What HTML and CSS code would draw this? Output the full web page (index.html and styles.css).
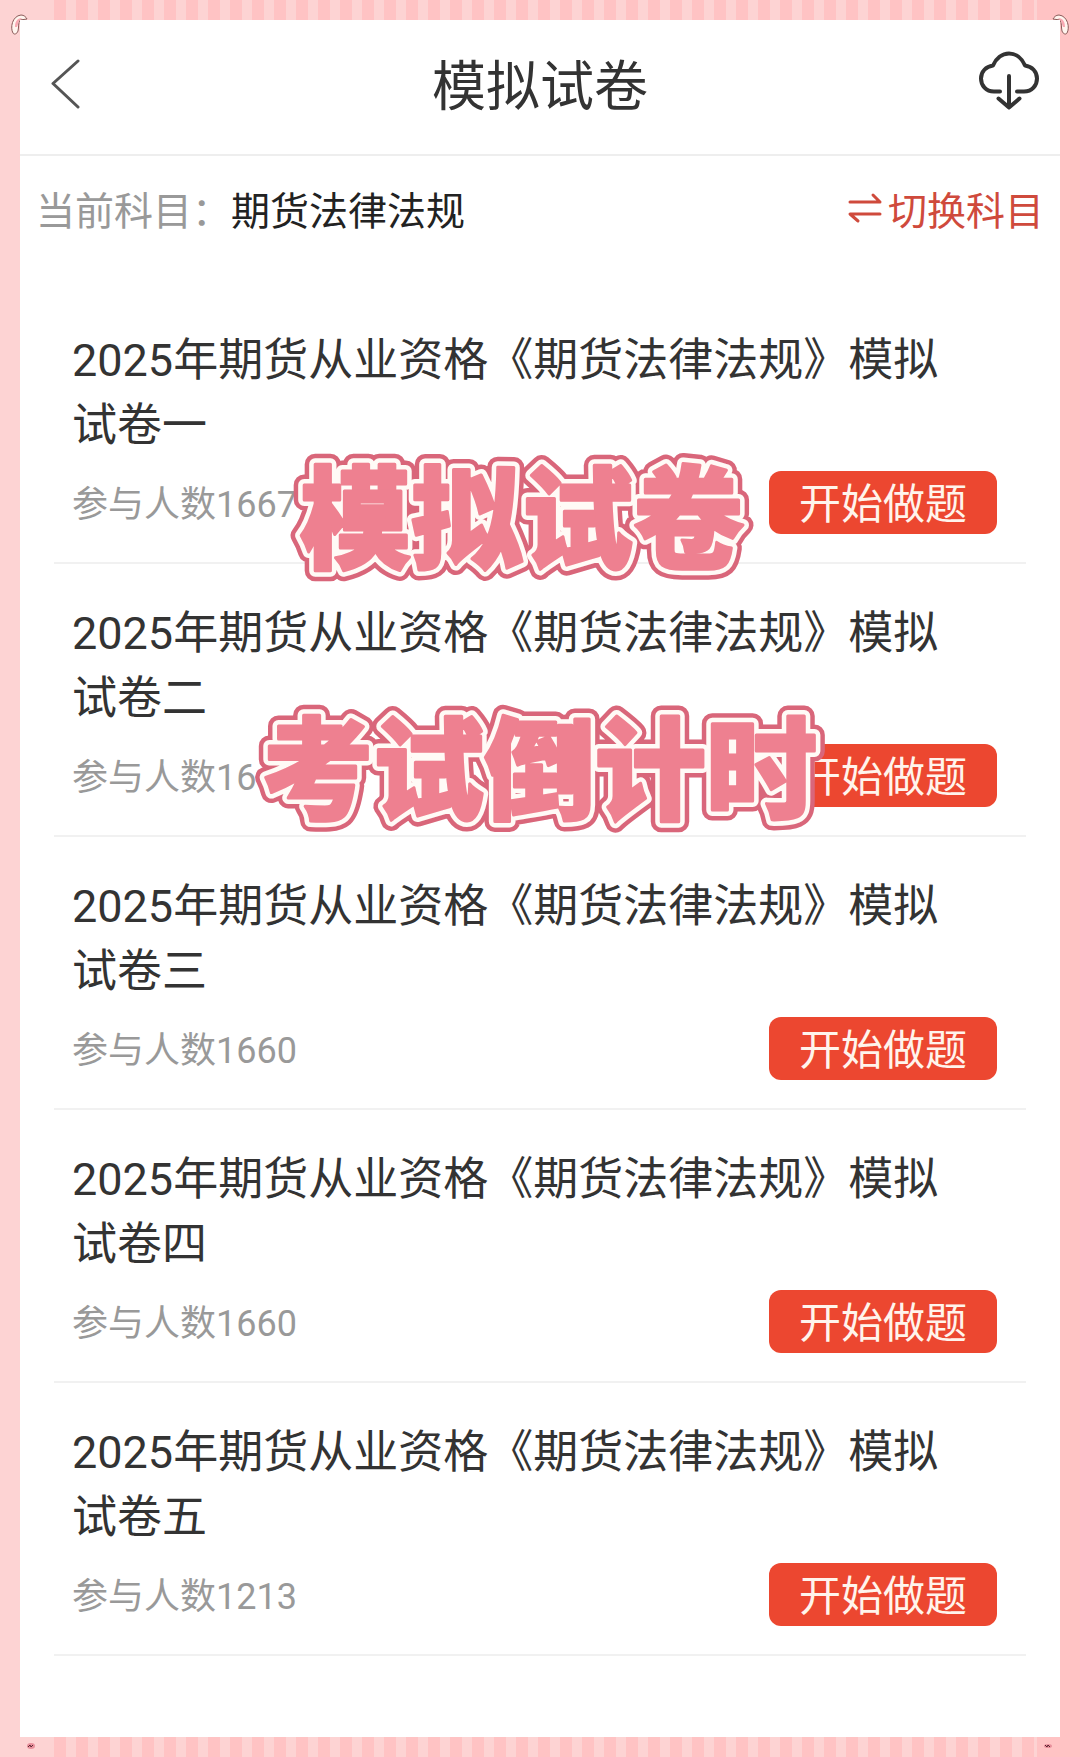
FILE: index.html
```html
<!doctype html>
<html lang="zh-CN">

<head>
  <meta charset="utf-8">
  <title>模拟试卷</title>
  <meta name="viewport" content="width=device-width, initial-scale=1">
  <link rel="stylesheet" href="styles.css">
</head>

<body>
  <div class="frame">
    <svg class="corner corner_tl" width="18" height="22" viewBox="0 0 18 22" aria-hidden="true">
      <path class="bow" d="M3 19C0 14 2 2 11 1c3 0 5 2 6 4l-7 1c-2 3-1 7-2 11-1 3-4 4-5 2z"/>
      <path class="bow_in" d="M5 13c0-5 2-9 7-9l-3 3c-1 2-1 4-2 6z"/>
    </svg>
    <svg class="corner corner_tr" width="18" height="22" viewBox="0 0 18 22" aria-hidden="true">
      <path class="bow" d="M15 19C18 14 16 2 7 1 4 1 2 3 1 5l7 1c2 3 1 7 2 11 1 3 4 4 5 2z"/>
      <path class="bow_in" d="M13 13c0-5-2-9-7-9l3 3c1 2 1 4 2 6z"/>
    </svg>
    <svg class="corner corner_bl" width="8" height="6" viewBox="0 0 8 6" aria-hidden="true">
      <ellipse cx="4" cy="3" rx="4" ry="3" fill="#e8909c"/>
      <path d="M1 4l2-2 1 2 2-2" stroke="#5a2530" fill="none"/>
    </svg>
    <svg class="corner corner_br" width="8" height="6" viewBox="0 0 8 6" aria-hidden="true">
      <ellipse cx="4" cy="3" rx="4" ry="2" fill="#e8909c"/>
      <path d="M1 2l2 2 1-2 2 2" stroke="#5a2530" fill="none"/>
    </svg>

    <main class="sheet">
      <header class="header">
        <a href="#" class="icon_link icon_back" aria-label="返回">
          <svg width="30" height="52" viewBox="0 0 30 52">
            <path d="M27 3L2 25.500L27 49" fill="none" stroke="#555" stroke-width="3" stroke-linecap="round" stroke-linejoin="round"/>
          </svg>
        </a>
        <h1>模拟试卷</h1>
        <a href="#" class="icon_link" aria-label="下载">
          <svg width="60" height="66" viewBox="978 50 60 66">
            <path d="M999 90.500h-6c-8 0-13-6-13-13 0-7 5-12 12-13 3-7 9-12 16-12s13 5 16 12c7 1 12 6 12 13 0 7-5 13-13 13h-7M1008 75v31M997.500 97.500l10.500 9 10.500-9" fill="none" stroke="#333" stroke-width="4" stroke-linecap="round" stroke-linejoin="round"/>
          </svg>
        </a>
      </header>

      <div class="subject">
        <span class="subject_label">当前科目：</span>
        <span class="subject_name">期货法律法规</span>
        <a href="#" class="subject_switch">
          <svg width="34" height="32" viewBox="848 192 34 32" aria-hidden="true">
            <path d="M850 202h30l-7-7M880 214h-30l8 7" fill="none" stroke="#cf4a3c" stroke-width="3" stroke-linejoin="round" stroke-linecap="round"/>
          </svg>
          切换科目
        </a>
      </div>

      <ul class="papers">
        <li class="paper">
          <h2>2025年期货从业资格《期货法律法规》模拟试卷一</h2>
          <div class="paper_meta">
            <span>参与人数1667</span>
            <button type="button" class="paper_button">开始做题</button>
          </div>
        </li>
        <li class="paper">
          <h2>2025年期货从业资格《期货法律法规》模拟试卷二</h2>
          <div class="paper_meta">
            <span>参与人数16</span>
            <button type="button" class="paper_button">开始做题</button>
          </div>
        </li>
        <li class="paper">
          <h2>2025年期货从业资格《期货法律法规》模拟试卷三</h2>
          <div class="paper_meta">
            <span>参与人数1660</span>
            <button type="button" class="paper_button">开始做题</button>
          </div>
        </li>
        <li class="paper">
          <h2>2025年期货从业资格《期货法律法规》模拟试卷四</h2>
          <div class="paper_meta">
            <span>参与人数1660</span>
            <button type="button" class="paper_button">开始做题</button>
          </div>
        </li>
        <li class="paper">
          <h2>2025年期货从业资格《期货法律法规》模拟试卷五</h2>
          <div class="paper_meta">
            <span>参与人数1213</span>
            <button type="button" class="paper_button">开始做题</button>
          </div>
        </li>
      </ul>

      <svg class="sticker sticker_one" width="480" height="140" viewBox="0 0 480 140">
        <use href="#sticker_one" class="sticker_outer"/>
        <use href="#sticker_one" class="sticker_inner"/>
        <use href="#sticker_one" class="sticker_face"/>
        <text id="sticker_one" x="14" y="111">模拟试卷</text>
      </svg>
      <svg class="sticker sticker_two" width="600" height="140" viewBox="0 0 600 140">
        <use href="#sticker_two" class="sticker_outer"/>
        <use href="#sticker_two" class="sticker_inner"/>
        <use href="#sticker_two" class="sticker_face"/>
        <text id="sticker_two" x="14" y="111">考试倒计时</text>
      </svg>
    </main>
  </div>
</body>

</html>
```

FILE: styles.css
```css
* {
  margin: 0;
  box-sizing: border-box;
}

body {
  font-family: Roboto, "Noto Sans CJK SC", sans-serif;
  color: #333;
}

a {
  color: inherit;
  text-decoration: none;
}

.frame {
  position: relative;
  min-height: 100vh;
  padding: 20px;
  display: flex;
  background:
    linear-gradient(#fdd3d3, #fdd3d3) left / 54px 100% no-repeat,
    linear-gradient(#ffc3c4, #ffc3c4) right / 43px 100% no-repeat,
    repeating-linear-gradient(90deg, #ffc3c4 0 12px, #fdd3d3 12px 22px) 54px 0;
}

.sheet {
  position: relative;
  flex: 1;
  min-width: 0;
  background: #fff;
}

.header {
  display: flex;
  align-items: center;
  justify-content: space-between;
  height: 136px;
  padding: 0 21px 6px;
  border-bottom: 2px solid #eee;
}

.header h1 {
  padding-top: 8px;
  font-size: 54px;
  font-weight: 400;
  line-height: 80px;
}

.icon_link {
  display: flex;
  width: 60px;
}

.icon_back {
  padding-left: 10px;
}

.subject {
  display: flex;
  align-items: center;
  height: 110px;
  padding: 0 16px 6px;
  font-size: 39px;
}

.subject_label {
  color: #999;
}

.subject_name {
  color: #222;
}

.subject_switch {
  display: flex;
  align-items: center;
  gap: 6px;
  margin-left: auto;
  color: #cf4a3c;
}

.papers {
  list-style: none;
  padding: 25px 34px 80px;
}

.paper {
  padding: 37px 29px 28px 18px;
  border-bottom: 2px solid #f1f1f1;
}

.paper h2 {
  padding-right: 40px;
  font-size: 45px;
  font-weight: 400;
  line-height: 65px;
}

.paper_meta {
  display: flex;
  align-items: center;
  justify-content: space-between;
  margin-top: 13px;
  font-size: 36px;
  line-height: 52px;
  color: #999;
}

.paper_meta span {
  padding-top: 4px;
}

.paper_button {
  width: 228px;
  height: 63px;
  padding: 4px 0 0;
  border: 0;
  border-radius: 12px;
  background: #ec4730;
  color: #fff4ec;
  font-family: inherit;
  font-size: 42px;
  line-height: 59px;
}

/* stickers lie over the list */
.sticker {
  position: absolute;
  overflow: visible;
  pointer-events: none;
  font-family: "Noto Sans CJK SC", sans-serif;
  font-size: 111px;
  font-weight: 900;
  fill: #ee8090;
}

.sticker_one {
  left: 266px;
  top: 429px;
}

.sticker_two {
  left: 228px;
  top: 680px;
}

.sticker_outer,
.sticker_inner,
.sticker_face {
  stroke-linejoin: round;
}

.sticker_outer {
  stroke: #d9667a;
  stroke-width: 21px;
}

.sticker_inner {
  stroke: #fffaf6;
  stroke-width: 12px;
}

.sticker_face {
  stroke: #ee8090;
  stroke-width: 3px;
}

.corner {
  position: absolute;
}

.corner_tl {
  left: 10px;
  top: 14px;
}

.corner_tr {
  right: 10px;
  top: 14px;
}

.corner_bl {
  left: 27px;
  bottom: 8px;
}

.corner_br {
  right: 28px;
  bottom: 8px;
}

.bow {
  fill: #fff4ee;
  stroke: #8a5a58;
}

.bow_in {
  fill: #f9a9b2;
}
```
